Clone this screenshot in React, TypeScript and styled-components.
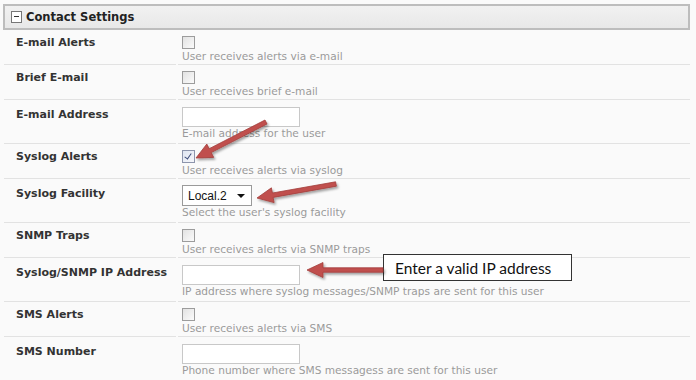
import React from "react";
import styled, { createGlobalStyle } from "styled-components";

const GlobalStyle = createGlobalStyle`
  html, body {
    margin: 0;
    padding: 0;
    background: #fafafa;
  }
  body {
    font-family: "DejaVu Sans", Verdana, sans-serif;
    color: #333;
  }
`;

const Page = styled.div`
  position: relative;
  width: 696px;
  height: 380px;
  overflow: hidden;
  padding: 4px 6px 0 3px;
  box-sizing: border-box;
`;

const Header = styled.div`
  height: 26px;
  box-sizing: border-box;
  border: 2px solid #bdbdbd;
  background: linear-gradient(#f1f1f1, #e8e8e8);
  display: flex;
  align-items: center;
  gap: 4px;
  padding-left: 6px;
  font-size: 11.5px;
  font-weight: bold;
  color: #222;
`;

const Toggle = styled.span`
  width: 9px;
  height: 10px;
  border: 1px solid #777;
  background: #fff;
  position: relative;
  &::after {
    content: "";
    position: absolute;
    left: 2px;
    right: 2px;
    top: 4px;
    height: 1px;
    background: #333;
  }
`;

const Table = styled.div`
  display: grid;
  grid-template-columns: 172px 1fr;
  column-gap: 2px;
  padding-left: 1px;
`;

const LabelCell = styled.div<{ $tall?: boolean }>`
  box-sizing: border-box;
  border-bottom: 1px solid #e2e2e2;
  padding: ${(p) => (p.$tall ? "9px" : "7px")} 0 0 12px;
  height: ${(p) => (p.$tall ? "44px" : "35px")};
  font-size: 11px;
  font-weight: bold;
  color: #333;
  line-height: 12px;
`;

const FieldCell = styled.div<{ $tall?: boolean }>`
  box-sizing: border-box;
  border-bottom: 1px solid #e2e2e2;
  padding: 6px 0 0 4px;
  height: ${(p) => (p.$tall ? "44px" : "35px")};
  display: flex;
  flex-direction: column;
  align-items: flex-start;
`;

const Check = styled.span<{ $on?: boolean }>`
  width: 11px;
  height: 11px;
  border: 1px solid #9c9c9c;
  background: linear-gradient(135deg, #e2e2e2, #fbfbfb);
  position: relative;
  margin-bottom: 1px;
  ${(p) =>
    p.$on &&
    `
    background: linear-gradient(135deg, #dfe5f1, #f6f7fb);
    border-color: #8d95ac;
    &::after {
      content: "";
      position: absolute;
      left: 3px;
      top: 1px;
      width: 3px;
      height: 6px;
      border: solid #3b4a78;
      border-width: 0 1.6px 1.6px 0;
      transform: rotate(35deg);
    }
  `}
`;

const TextBox = styled.div`
  width: 116px;
  height: 18px;
  border: 1px solid #c8c8c8;
  background: #fff;
  margin-top: 1px;
`;

const Select = styled.div`
  border: 1px solid #9a9a9a;
  background: #fff;
  display: flex;
  align-items: center;
  justify-content: space-between;
  padding: 0 6px 0 5px;
  box-sizing: border-box;
  width: 70px;
  height: 21px;
  font-family: "Liberation Sans", Arial, sans-serif;
  font-size: 12px;
  color: #111;
  &::after {
    content: "";
    border-left: 4px solid transparent;
    border-right: 4px solid transparent;
    border-top: 4px solid #111;
  }
`;

const Hint = styled.div`
  font-size: 10.6px;
  line-height: 13px;
  color: #9a9a9a;
  white-space: nowrap;
`;

const Callout = styled.div`
  position: absolute;
  left: 383px;
  top: 254px;
  width: 189px;
  height: 27px;
  box-sizing: border-box;
  border: 1px solid #333;
  background: #fff;
  display: flex;
  align-items: center;
  padding-left: 11px;
  font-family: Lato, "Open Sans", sans-serif;
  font-size: 15.5px;
  color: #111;
`;

const Overlay = styled.svg`
  position: absolute;
  left: 0;
  top: 0;
  pointer-events: none;
`;

type Row = {
  label: string;
  kind: "check" | "text" | "select";
  hint: string;
  on?: boolean;
};

const rows: Row[] = [
  { label: "E-mail Alerts", kind: "check", hint: "User receives alerts via e-mail" },
  { label: "Brief E-mail", kind: "check", hint: "User receives brief e-mail" },
  { label: "E-mail Address", kind: "text", hint: "E-mail address for the user" },
  { label: "Syslog Alerts", kind: "check", hint: "User receives alerts via syslog", on: true },
  { label: "Syslog Facility", kind: "select", hint: "Select the user's syslog facility" },
  { label: "SNMP Traps", kind: "check", hint: "User receives alerts via SNMP traps" },
  {
    label: "Syslog/SNMP IP Address",
    kind: "text",
    hint: "IP address where syslog messages/SNMP traps are sent for this user",
  },
  { label: "SMS Alerts", kind: "check", hint: "User receives alerts via SMS" },
  { label: "SMS Number", kind: "text", hint: "Phone number where SMS messagess are sent for this user" },
];

function arrowPoints(x1: number, y1: number, x2: number, y2: number) {
  const dx = x2 - x1;
  const dy = y2 - y1;
  const len = Math.hypot(dx, dy);
  const ux = dx / len;
  const uy = dy / len;
  const nx = -uy;
  const ny = ux;
  const head = 16;
  const hw = 7.5;
  const sw = 2.2;
  const bx = x2 - ux * head;
  const by = y2 - uy * head;
  const pts = [
    [x1 + nx * sw, y1 + ny * sw],
    [bx + nx * sw, by + ny * sw],
    [bx + nx * hw, by + ny * hw],
    [x2, y2],
    [bx - nx * hw, by - ny * hw],
    [bx - nx * sw, by - ny * sw],
    [x1 - nx * sw, y1 - ny * sw],
  ];
  return pts.map((p) => p.map((v) => v.toFixed(1)).join(",")).join(" ");
}

const arrows = [
  [266, 122, 196, 158],
  [336, 184, 257, 198],
  [383, 270, 307, 270],
];

export default function App() {
  return (
    <Page>
      <GlobalStyle />
      <Header>
        <Toggle />
        Contact Settings
      </Header>
      <Table>
        {rows.map((r) => {
          const tall = r.kind !== "check";
          return (
            <React.Fragment key={r.label}>
              <LabelCell $tall={tall}>{r.label}</LabelCell>
              <FieldCell $tall={tall}>
                {r.kind === "check" && <Check $on={r.on} />}
                {r.kind === "text" && <TextBox />}
                {r.kind === "select" && <Select>Local.2</Select>}
                <Hint>{r.hint}</Hint>
              </FieldCell>
            </React.Fragment>
          );
        })}
      </Table>
      <Callout>Enter a valid IP address</Callout>
      <Overlay width={696} height={380}>
        <defs>
          <filter id="sh" x="-20%" y="-50%" width="140%" height="200%">
            <feDropShadow dx="1.5" dy="2" stdDeviation="1.2" floodColor="#000" floodOpacity="0.35" />
          </filter>
        </defs>
        {arrows.map((a, i) => (
          <polygon
            key={i}
            points={arrowPoints(a[0], a[1], a[2], a[3])}
            fill="#c0504d"
            stroke="#a23e3b"
            strokeWidth={0.8}
            filter="url(#sh)"
          />
        ))}
      </Overlay>
    </Page>
  );
}
